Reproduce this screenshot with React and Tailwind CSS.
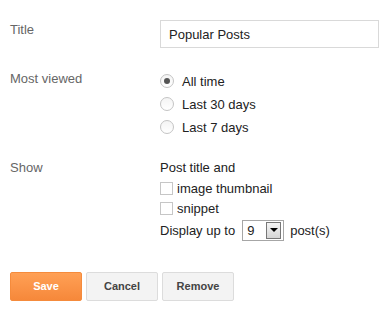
import React from "react";

function Radio({ checked }) {
  return (
    <span className="w-[14px] h-[14px] rounded-full border border-[#c4c4c4] bg-gradient-to-b from-[#f4f4f4] to-white flex items-center justify-center shrink-0 mb-[2px]">
      {checked && <span className="w-[6px] h-[6px] rounded-full bg-[#555]" />}
    </span>
  );
}

function Check() {
  return <span className="w-[13px] h-[13px] border border-[#c6c6c6] bg-white shrink-0" />;
}

export default function App() {
  return (
    <div
      className="w-[384px] h-[310px] bg-white pl-[10px] pt-[20px] text-[13px] leading-[15px] text-[#222]"
      style={{ fontFamily: '"Liberation Sans", Arial, sans-serif' }}
    >
      <div className="flex">
        <div className="w-[150px] pt-[2px] text-[#666]">Title</div>
        <div className="w-[219px] h-[28px] border border-[#d9d9d9] flex items-center pl-[8px]">
          Popular Posts
        </div>
      </div>

      <div className="flex mt-[22px]">
        <div className="w-[150px] pt-[1px] text-[#666]">Most viewed</div>
        <div className="flex flex-col">
          {[
            ["All time", true],
            ["Last 30 days", false],
            ["Last 7 days", false],
          ].map(([t, c]) => (
            <div key={t} className="h-[23px] flex items-center gap-[8px]">
              <Radio checked={c} />
              <span>{t}</span>
            </div>
          ))}
        </div>
      </div>

      <div className="flex mt-[21px]">
        <div className="w-[150px] text-[#666]">Show</div>
        <div className="flex flex-col">
          <div className="h-[18px]">Post title and</div>
          <div className="h-[20px] flex items-center gap-[4px]">
            <Check />
            <span>image thumbnail</span>
          </div>
          <div className="h-[20px] flex items-center gap-[4px]">
            <Check />
            <span>snippet</span>
          </div>
          <div className="h-[20px] mt-[2px] flex items-center">
            <span className="mr-[7px]">Display up to</span>
            <div className="w-[42px] h-[21px] border border-[#a6a6a6] bg-white flex items-center justify-between pl-[4px] pr-[2px]">
              <span>9</span>
              <span className="w-[15px] h-[17px] border border-[#777] bg-gradient-to-b from-[#f4f4f4] to-[#d6d6d6] flex items-center justify-center">
                <span className="w-0 h-0 border-l-[4px] border-r-[4px] border-t-[4px] border-l-transparent border-r-transparent border-t-black" />
              </span>
            </div>
            <span className="ml-[6px]">post(s)</span>
          </div>
        </div>
      </div>

      <div className="flex gap-[4px] mt-[32px]">
        <div className="w-[72px] h-[29px] rounded-[2px] border border-[#f58b3c] bg-gradient-to-b from-[#ffa055] to-[#f6883a] text-white font-bold text-[11px] flex items-center justify-center">
          Save
        </div>
        <div className="w-[72px] h-[29px] rounded-[2px] border border-[#dcdcdc] bg-[#f3f3f3] text-[#444] font-bold text-[11px] flex items-center justify-center">
          Cancel
        </div>
        <div className="w-[72px] h-[29px] rounded-[2px] border border-[#dcdcdc] bg-[#f3f3f3] text-[#444] font-bold text-[11px] flex items-center justify-center">
          Remove
        </div>
      </div>
    </div>
  );
}
